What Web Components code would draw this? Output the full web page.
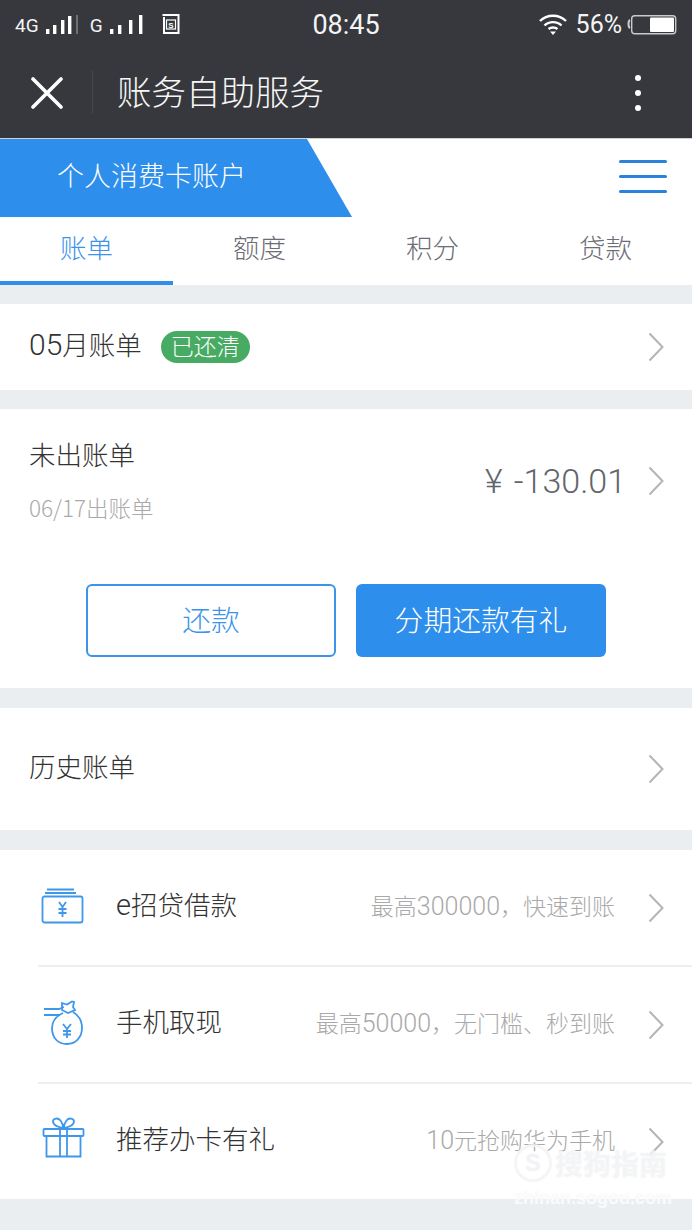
<!DOCTYPE html>
<html lang="zh-CN">
  <head>
    <meta charset="UTF-8" />
    <title>账务自助服务</title>
    <style>
      html, body { margin: 0; padding: 0; }
      body {
        width: 692px;
        height: 1230px;
        overflow: hidden;
        position: relative;
        background: #ebeef1;
        font-family: "Noto Sans CJK SC", "Noto Sans", sans-serif;
        font-weight: 300;
        color: #333;
      }
    </style>
    <script>
      // small helper so every element is just a style + markup string
      function define(name, css, html, setup) {
        const t = document.createElement("template");
        t.innerHTML = `<style>${css}</style>${html}`;
        customElements.define(name, class extends HTMLElement {
          constructor() {
            super();
            this.attachShadow({ mode: "open" });
            this.shadowRoot.appendChild(t.content.cloneNode(true));
          }
          connectedCallback() {
            if (setup) setup(this, this.shadowRoot);
          }
        });
      }

      const latin = `"Roboto", "Noto Sans CJK SC", sans-serif`;

      define("status-bar", `
        :host { display: grid; grid-template-columns: 1fr auto 1fr; align-items: center; height: 48px; color: #f4f4f5; font-family: ${latin}; font-weight: 400; }
        .l, .r { display: flex; align-items: center; }
        .l { padding-left: 15px; font-size: 19px; padding-top: 3px; }
        .r { justify-content: flex-end; padding-right: 15px; font-size: 25px; }
        .time { font-size: 27px; padding-top: 1px; }
        svg { display: block; }
        .wifi { margin-right: 8px; }
      `, `
        <div class="l">
          <span>4G</span>
          <svg style="margin-left:5px" width="34" height="22" viewBox="0 0 34 22"><g fill="#fff"><rect x="2" y="14" width="3.400" height="5"/><rect x="9" y="10" width="3.400" height="9"/><rect x="17" y="5" width="3.400" height="14"/><rect x="24" y="1" width="3.400" height="18"/></g><rect x="32" y="0" width="2" height="19" fill="#6e7074"/></svg>
          <span style="margin-left:12px">G</span>
          <svg style="margin-left:5px" width="36" height="22" viewBox="0 0 36 22"><g fill="#fff"><rect x="2" y="14" width="3.400" height="5"/><rect x="10" y="10" width="3.400" height="9"/><rect x="21" y="5" width="3.400" height="14"/><rect x="31" y="0" width="3.400" height="19"/></g></svg>
          <svg style="margin-left:17px;margin-top:-4px" width="20" height="22" viewBox="0 0 20 22" fill="none" stroke="#fff" stroke-width="2"><path d="M1.500 2h16v18H3V4"/><rect x="5.500" y="7" width="9" height="9" stroke-width="1.200"/><text x="10" y="14.500" font-size="8" text-anchor="middle" fill="#fff" stroke="none" font-family="Liberation Sans" font-weight="700">S</text></svg>
        </div>
        <div class="time">08:45</div>
        <div class="r">
          <svg class="wifi" width="30" height="22" viewBox="0 0 30 22" fill="none" stroke="#fff" stroke-width="2.400"><path d="M2 8C9 1 21 1 28 8"/><path d="M6.500 12.500C11 8 19 8 23.500 12.500"/><path d="M10.500 16C13 14 17 14 19.500 16"/><path d="M12 18.500L15 22L18 18.500Z" fill="#fff" stroke="none"/></svg>
          <span>56%</span>
          <svg style="margin-left:5px" width="50" height="22" viewBox="0 0 50 22"><path d="M3 7C1 8 1 14 3 15" fill="none" stroke="#ccc" stroke-width="2"/><rect x="4.700" y="2.700" width="44" height="18" rx="3" fill="none" stroke="#c9cacc" stroke-width="1.400"/><rect x="23" y="4.500" width="24" height="14.500" rx="1" fill="#fff"/></svg>
        </div>
      `);

      define("nav-bar", `
        :host { display: flex; align-items: center; height: 90px; color: #f6f6f6; }
        .x { width: 93px; height: 90px; display: flex; align-items: center; justify-content: center; box-sizing: border-box; position: relative; padding-bottom: 1px; }
        .x::after { content: ""; position: absolute; right: 0; top: 22px; height: 44px; width: 1px; background: #44464b; }
        .title { margin-left: 24px; font-size: 34.500px; flex: 1; line-height: 84px; padding-bottom: 6px; }
        .more { display: flex; flex-direction: column; gap: 9px; padding-right: 51px; margin-top: -1px; }
        .more i { display: block; width: 6px; height: 6px; border-radius: 50%; background: #fff; }
      `, `
        <div class="x"><svg width="32" height="32" viewBox="0 0 32 32" stroke="#fff" stroke-width="3.600" stroke-linecap="round"><path d="M2 2L30 30M30 2L2 30"/></svg></div>
        <div class="title"><slot></slot></div>
        <div class="more"><i></i><i></i><i></i></div>
      `);

      define("account-banner", `
        :host { display: flex; justify-content: space-between; height: 79px; background: #fff; border-top: 1px solid #cfd0d2; box-sizing: border-box; }
        .tag { width: 352px; box-sizing: border-box; padding: 0 0 7px 57px; display: flex; align-items: center; background: #2d8eec; color: #fff; font-size: 27px; clip-path: polygon(0 0, 307px 0, 100% 100%, 0 100%); }
        .menu { display: flex; flex-direction: column; gap: 12px; padding: 21px 25px 0 0; }
        .menu i { display: block; width: 48px; height: 3px; background: #2a82da; border-radius: 2px; }
      `, `
        <div class="tag"><slot></slot></div>
        <div class="menu"><i></i><i></i><i></i></div>
      `);

      define("tab-bar", `
        :host { display: grid; grid-template-columns: repeat(4, 1fr); height: 68px; background: #fff; margin-bottom: 19px; }
        div { display: flex; align-items: center; justify-content: center; font-size: 26.500px; color: #6b6e75; padding-bottom: 9px; box-sizing: border-box; }
        .on { color: #3c94ea; border-bottom: 4px solid #2d8eec; padding-bottom: 5px; }
      `, `
        <div class="on">账单</div><div>额度</div><div>积分</div><div>贷款</div>
      `);

      const chevron = `<svg class="chev" width="16" height="30" viewBox="0 0 16 30" fill="none" stroke="#b4b4b6" stroke-width="2"><path d="M1.500 1.500L14.500 15L1.500 28.500"/></svg>`;

      define("link-row", `
        :host { display: flex; align-items: center; background: #fff; padding: 0 28px 0 29px; font-size: 26.500px; color: #333; margin-bottom: 19px; box-sizing: border-box; }
        .grow { flex: 1; display: flex; align-items: center; }
        ::slotted(span) { margin-bottom: 7px; }
        ::slotted(status-pill) { margin: 0 0 0 19px; }
        .chev { display: block; }
      `, `<div class="grow"><slot></slot></div>${chevron}`);

      define("status-pill", `
        :host { display: inline-flex; align-items: center; justify-content: center; width: 89px; height: 32px; border-radius: 16px; background: #47ab64; color: #fff; font-size: 23px; padding-bottom: 5px; box-sizing: border-box; }
      `, `<slot></slot>`);

      define("bill-card", `
        :host { display: block; background: #fff; height: 279px; margin-bottom: 20px; box-sizing: border-box; padding: 22px 28px 0 29px; }
        .top { display: flex; justify-content: space-between; align-items: center; }
        .name { font-size: 26.500px; color: #333; line-height: 46px; }
        .due { margin-top: 7px; font-size: 22.500px; color: #aaa; line-height: 46px; }
        .amt { display: flex; align-items: center; gap: 22px; font-family: ${latin}; font-size: 34px; color: #62656c; font-weight: 300; }
        .amt span { word-spacing: 3px; }
        .btns { display: flex; gap: 20px; margin: 54px 0 0 57px; }
        .btn { width: 250px; height: 73px; box-sizing: border-box; border-radius: 6px; display: flex; align-items: center; justify-content: center; font-size: 28.800px; padding-bottom: 4px; }
        .ghost { border: 2px solid #3c94ea; color: #3c94ea; }
        .solid { background: #2d8eec; color: #fff; }
        .chev { display: block; }
      `, `
        <div class="top">
          <div>
            <div class="name">未出账单</div>
            <div class="due"><span style="font-family:${latin};font-size:26px">06/17</span>出账单</div>
          </div>
          <div class="amt"><span>¥ -130.01</span>${chevron}</div>
        </div>
        <div class="btns"><div class="btn ghost">还款</div><div class="btn solid">分期还款有礼</div></div>
      `);

      define("promo-list", `
        :host { display: block; background: #fff; }
      `, `<slot></slot>`);

      define("promo-row", `
        :host { display: flex; align-items: center; height: 117px; margin-left: 38px; padding-right: 28px; border-top: 2px solid #eceef0; box-sizing: border-box; }
        :host(:first-child) { border-top: 0; height: 115px; }
        .icon { width: 50px; height: 50px; margin-right: 28px; display: flex; align-items: center; justify-content: center; }
        .title { font-size: 26.500px; color: #333; flex: 1; padding-bottom: 8px; }
        .sub { font-size: 23px; color: #a9a9a9; margin-right: 33px; padding-bottom: 6px; }
        .sub b { font: 300 25px ${latin}; }
        .chev { display: block; }
      `, `
        <div class="icon"><slot name="icon"></slot></div>
        <div class="title"><slot></slot></div>
        <div class="sub"></div>
        ${chevron}
      `, (el, root) => {
        root.querySelector(".sub").innerHTML = el.getAttribute("note").replace(/\d+/g, "<b>$&</b>");
      });

      define("sogou-mark", `
        :host { position: absolute; right: 20px; bottom: 22px; color: rgba(244,245,246,.8); text-align: center; display: block; }
        .top { display: flex; align-items: center; gap: 3px; font-size: 28px; font-weight: 700; line-height: 36px; text-shadow: 0 0 2px rgba(236,238,240,.7); }
        .s { width: 32px; height: 32px; border: 3px solid rgba(242,243,245,.8); border-radius: 50%; font: 700 23px/32px "Liberation Sans", sans-serif; color: rgba(242,243,245,.9); text-align: center; }
        .url { font: 700 18px/20px "Liberation Sans", sans-serif; color: rgba(252,252,253,.9); text-shadow: 0 0 2px rgba(240,241,243,.8); margin-top: 6px; }
      `, `
        <div class="top"><span class="s">S</span><span>搜狗指南</span></div>
        <div class="url">zhinan.sogou.com</div>
      `);
    </script>
  </head>

  <body>
    <div style="background:#36383d">
      <status-bar></status-bar>
      <nav-bar>账务自助服务</nav-bar>
    </div>
    <account-banner>个人消费卡账户</account-banner>
    <tab-bar></tab-bar>

    <link-row style="height:86px"><span><span style="font-family:Roboto;font-size:30px">05</span>月账单</span><status-pill>已还清</status-pill></link-row>
    <bill-card></bill-card>
    <link-row style="height:122px;margin-bottom:20px"><span>历史账单</span></link-row>

    <promo-list>
      <promo-row note="最高300000，快速到账">
        <svg slot="icon" width="44" height="38" viewBox="0 0 44 38" fill="none" stroke="#3f97ec" stroke-width="1.800" style="margin:0 0 2px 0">
          <path d="M6 1.500H33M4 5H35"/>
          <rect x="1.500" y="8.500" width="40" height="26" rx="2"/>
          <path d="M18 14L21.500 19L25 14M21.500 19V29M17.500 21H25.500M17.500 25H25.500"/>
        </svg>
        <span style="font-family:Roboto;font-size:29px">e</span>招贷借款
      </promo-row>
      <promo-row note="最高50000，无门槛、秒到账">
        <svg slot="icon" width="44" height="46" viewBox="0 0 44 46" fill="none" stroke="#3f97ec" stroke-width="1.800" style="margin:0 0 4px 3px">
          <path d="M1 9H16L21 7M1 15H17"/>
          <path d="M19 3L24 4.500L29 1.500L31 2L30 7L32 10L25 13L19 10Z"/>
          <path d="M20 13C13 16 9 22 9 28C9 38 15 44 24 44C33 44 39 37 39 28C39 21 35 15 30 12"/>
          <path d="M20 24L24 29L28 24M24 29V38M20 31H28M20 34.500H28"/>
        </svg>
        手机取现
      </promo-row>
      <promo-row note="10元抢购华为手机">
        <svg slot="icon" width="44" height="42" viewBox="0 0 44 42" fill="none" stroke="#3f97ec" stroke-width="1.800" style="margin:0 0 8px 2px">
          <rect x="1.500" y="12" width="40" height="7" rx="1"/>
          <path d="M4.500 19V39.500H38.500V19"/>
          <path d="M18 12V39.500M25 12V39.500"/>
          <path d="M21.500 11C17 11 11 8 11 4.500C11 1 16 0.500 18.500 3.500C20 5.500 21 8 21.500 11C22 8 23 5.500 24.500 3.500C27 0.500 32 1 32 4.500C32 8 26 11 21.500 11Z"/>
        </svg>
        推荐办卡有礼
      </promo-row>
    </promo-list>

    <sogou-mark></sogou-mark>
  </body>
</html>
